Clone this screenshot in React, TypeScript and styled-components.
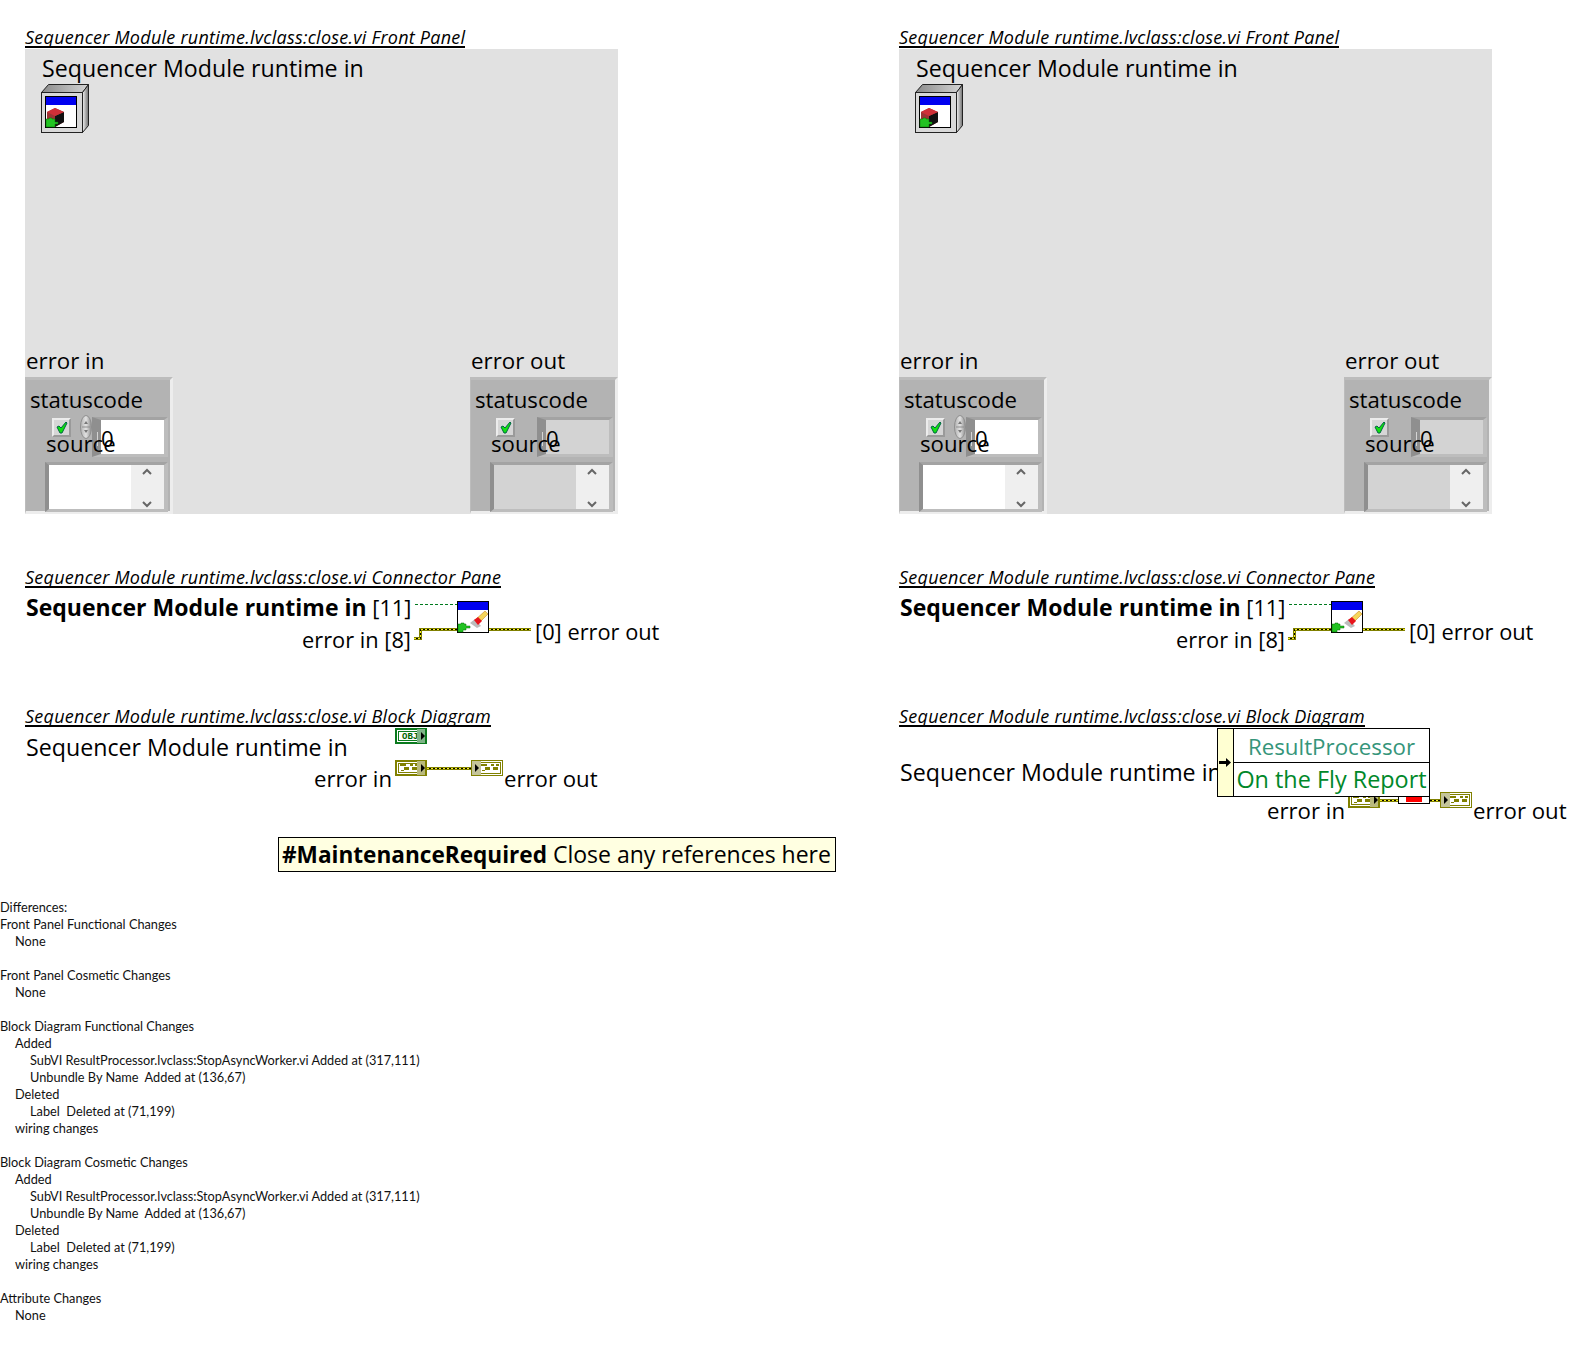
import React from "react";
import styled, { createGlobalStyle } from "styled-components";

const labelFont = `"Open Sans", "Noto Sans", sans-serif`;

const GlobalStyle = createGlobalStyle`
  html, body {
    margin: 0;
    padding: 0;
    background: #fff;
  }
`;

const Page = styled.div`
  width: 1594px;
  height: 1358px;
  overflow: hidden;
  font-family: ${labelFont};
  color: #000;
`;

const Columns = styled.div`
  display: grid;
  grid-template-columns: 874px 720px;
`;

const Column = styled.div`
  padding: 28px 0 0 25px;
  display: flex;
  flex-direction: column;
`;

const SectionTitle = styled.div<{ $gap?: number }>`
  width: fit-content;
  height: 18px;
  line-height: 19px;
  margin-top: ${(p) => p.$gap || 0}px;
  font-size: 18px;
  letter-spacing: 0.25px;
  font-style: italic;
  border-bottom: 2px solid #000;
  white-space: nowrap;
`;

const FrontPanel = styled.div`
  width: 593px;
  height: 465px;
  margin-top: 1px;
  background: #e1e1e1;
  display: flex;
  flex-direction: column;
  justify-content: space-between;
`;

const PanelHead = styled.div`
  padding: 4px 0 0 16px;
  display: flex;
  flex-direction: column;
  align-items: flex-start;
`;

const BigLabel = styled.span`
  font-size: 23.2px;
  line-height: 31px;
  padding-left: 1px;
  white-space: nowrap;
`;

const PanelFoot = styled.div`
  display: flex;
  justify-content: space-between;
  align-items: flex-end;
`;

const ErrorGroup = styled.div`
  display: flex;
  flex-direction: column;
`;

const ClusterName = styled.span`
  font-size: 22.3px;
  line-height: 27px;
  padding: 0 0 3px 1px;
  height: 27px;
`;

const Cluster = styled.div`
  position: relative;
  width: 148px;
  height: 137px;
  box-sizing: border-box;
  background: #b3b3b3;
  border-top: 3px solid #bcbcbc;
  border-left: 1px solid #bcbcbc;
  border-right: 3px solid #ededed;
  border-bottom: 3px solid #ededed;
`;

const ClusterText = styled.span<{ $x: number; $y: number }>`
  position: absolute;
  left: ${(p) => p.$x}px;
  top: ${(p) => p.$y}px;
  font-size: 22.2px;
  line-height: 28px;
  white-space: nowrap;
`;

const CheckButton = styled.div<{ $x: number }>`
  position: absolute;
  left: ${(p) => p.$x}px;
  top: 38px;
  width: 19px;
  height: 19px;
  box-sizing: border-box;
  background: #d6d6d6;
  border: 2px solid;
  border-color: #ececec #9a9a9a #9a9a9a #ececec;
  display: flex;
  align-items: center;
  justify-content: center;
`;

const Spinner = styled.svg`
  position: absolute;
  left: 54px;
  top: 35px;
`;

const ValueWell = styled.div<{ $indicator?: boolean; $top: number; $left: number; $height: number }>`
  position: absolute;
  left: ${(p) => p.$left}px;
  top: ${(p) => p.$top}px;
  width: ${(p) => 142 - p.$left}px;
  height: ${(p) => p.$height}px;
  box-sizing: border-box;
  background: ${(p) => (p.$indicator ? "#d3d3d3" : "#fff")};
  border-style: solid;
  border-color: #a3a3a3 #bdbdbd #bdbdbd #8f8f8f;
  border-width: 3px 4px 3px 4px;
`;

const NumericWell = styled(ValueWell)`
  border-left-width: 9px;

  &::before {
    content: "";
    position: absolute;
    left: -4px;
    top: 12px;
    width: 1px;
    height: 14px;
    background: #d4d4d4;
  }
`;

const ScrollTrack = styled.div`
  position: absolute;
  right: 0;
  top: 0;
  bottom: 0;
  width: 33px;
  background: #efefef;
  display: flex;
  flex-direction: column;
  justify-content: space-between;
  align-items: center;
  padding: 3px 2px 1px 0;
  box-sizing: border-box;
`;

const Canvas = styled.div<{ $height: number }>`
  position: relative;
  width: 660px;
  height: ${(p) => p.$height}px;
`;

const CanvasText = styled.span<{ $x?: number; $right?: number; $y: number }>`
  position: absolute;
  ${(p) => (p.$right !== undefined ? `right: ${p.$right}px;` : `left: ${p.$x}px;`)}
  top: ${(p) => p.$y}px;
  font-size: 22.2px;
  line-height: 30px;
  white-space: nowrap;
`;

const NameText = styled(CanvasText)`
  font-size: 23.2px;
`;

const PaneText = styled(CanvasText)`
  font-size: 21.8px;
`;

const Strong = styled.b`
  font-weight: 700;
  font-size: 22.6px;
`;

const PaneName = styled(Strong)`
  font-size: 23px;
`;

const CanvasGlyph = styled.svg<{ $x: number; $y: number }>`
  position: absolute;
  left: ${(p) => p.$x}px;
  top: ${(p) => p.$y}px;
  display: block;
`;

const Note = styled.div`
  position: absolute;
  left: 253px;
  top: 110px;
  width: 558px;
  height: 35px;
  box-sizing: border-box;
  border: 1px solid #000;
  background: #ffffe1;
  padding-left: 3px;
  font-size: 23px;
  line-height: 33px;
  white-space: nowrap;
`;

const ClassNode = styled.div`
  position: absolute;
  left: 318px;
  top: 1px;
  width: 213px;
  height: 69px;
  box-sizing: border-box;
  border: 1px solid #000;
  background: #fff;
  display: grid;
  grid-template-columns: 16px 1fr;
  grid-template-rows: 34px 1fr;
`;

const NodeRail = styled.div`
  grid-row: 1 / span 2;
  background: #ffffd2;
  border-right: 1px solid #000;
  position: relative;
`;

const NodeArrow = styled.svg`
  position: absolute;
  left: 0;
  top: 29px;
`;

const NodeRow = styled.div<{ $tone: string; $size: number; $line?: boolean }>`
  color: ${(p) => p.$tone};
  font-size: ${(p) => p.$size}px;
  line-height: 30px;
  padding-top: ${(p) => (p.$line ? 3 : 1)}px;
  text-align: center;
  white-space: nowrap;
  ${(p) => p.$line && "border-bottom: 1px solid #000;"}
`;

const StopVi = styled.div`
  position: absolute;
  left: 499px;
  top: 70px;
  width: 32px;
  height: 7px;
  box-sizing: border-box;
  background: #fff;
  border: 1px solid #000;
  border-width: 0 1px 1px 1px;
  display: flex;
  justify-content: center;
`;

const StopFlag = styled.div`
  width: 16px;
  height: 5px;
  background: #f00;
`;

const DiffText = styled.div`
  font-family: "Lato", "Open Sans", sans-serif;
  font-size: 12.75px;
  color: #111;
`;

const DiffLine = styled.div<{ $level: number }>`
  height: 17px;
  line-height: 17px;
  padding-left: ${(p) => p.$level * 15}px;
  white-space: pre;
`;

const Wire: React.FC<{ d: string }> = ({ d }) => (
  <>
    <path d={d} fill="none" stroke="#808000" strokeWidth="3" />
    <path d={d} fill="none" stroke="#000" strokeWidth="1" />
    <path d={d} fill="none" stroke="#f8f020" strokeWidth="1" strokeDasharray="2 2" />
  </>
);

const ClusterMarks: React.FC<{ tone: string; dx: number }> = ({ tone, dx }) => (
  <g fill={tone} transform={`translate(${dx} 0)`}>
    <rect x="0" y="4" width="6" height="2" />
    <rect x="10" y="4" width="3" height="2" />
    <rect x="15" y="4" width="3" height="2" />
    <rect x="4" y="7" width="5" height="3" />
    <rect x="12" y="7" width="5" height="3" />
    <rect x="1" y="10" width="3" height="1" />
  </g>
);

const ErrorControl: React.FC<{ x: number; y: number }> = ({ x, y }) => (
  <CanvasGlyph $x={x} $y={y} width="32" height="16" viewBox="0 0 32 16">
    <rect x="0" y="0" width="32" height="16" fill="#808000" />
    <rect x="2" y="2" width="28" height="12" fill="#fff" />
    <rect x="3.5" y="3.5" width="25" height="9" fill="none" stroke="#808000" />
    <ClusterMarks tone="#808000" dx={5} />
    <rect x="22" y="1" width="8" height="14" fill="#b9b97d" />
    <path d="M26 4l4 4-4 4z" fill="#000" />
  </CanvasGlyph>
);

const ErrorIndicator: React.FC<{ x: number; y: number }> = ({ x, y }) => (
  <CanvasGlyph $x={x} $y={y} width="32" height="16" viewBox="0 0 32 16">
    <rect x="0.5" y="0.5" width="31" height="15" fill="#fff" stroke="#808000" />
    <rect x="2.5" y="2.5" width="27" height="11" fill="none" stroke="#808000" />
    <rect x="1" y="1" width="9" height="14" fill="#c4c49a" />
    <path d="M4 4l4 4-4 4z" fill="#000" />
    <ClusterMarks tone="#808000" dx={10} />
  </CanvasGlyph>
);

const ObjControl: React.FC<{ x: number; y: number }> = ({ x, y }) => (
  <CanvasGlyph $x={x} $y={y} width="32" height="16" viewBox="0 0 32 16">
    <rect x="0" y="0" width="32" height="16" fill="#0b7a1e" />
    <rect x="2" y="2" width="28" height="12" fill="#fff" />
    <rect x="3.5" y="3.5" width="25" height="9" fill="none" stroke="#0b7a1e" />
    <text
      x="7"
      y="11"
      fontFamily="'Liberation Mono', monospace"
      fontSize="9"
      fontWeight="700"
      fill="#006400"
    >
      OBJ
    </text>
    <rect x="22" y="1" width="8" height="14" fill="#7fb487" />
    <path d="M26 4l4 4-4 4z" fill="#000" />
  </CanvasGlyph>
);

const ClassIcon: React.FC = () => (
  <svg width="48" height="49" viewBox="0 0 48 49" style={{ display: "block" }}>
    <defs>
      <linearGradient id="sideShade" x1="0" y1="0" x2="1" y2="0">
        <stop offset="0" stopColor="#f2f2f2" />
        <stop offset="1" stopColor="#6f6f6f" />
      </linearGradient>
      <linearGradient id="topShade" x1="0" y1="0" x2="1" y2="0">
        <stop offset="0" stopColor="#8a8a8a" />
        <stop offset="1" stopColor="#d5d5d5" />
      </linearGradient>
    </defs>
    <path d="M0.5 8.5L7.5 0.5H47.5L41.5 8.5Z" fill="url(#topShade)" stroke="#222" />
    <path d="M41.5 8.5L47.5 0.5V41.5L41.5 48.5Z" fill="url(#sideShade)" stroke="#222" />
    <rect x="0.5" y="8.5" width="41" height="40" fill="#d8d8d8" stroke="#222" />
    <rect x="4.5" y="12.5" width="31" height="31" fill="#fff" stroke="#000" />
    <rect x="5" y="13" width="30" height="8" fill="#0000f0" />
    <path d="M6 28l8-4 9 4v10l-9 5-8-5z" fill="#9c3434" />
    <path d="M14 32l9-4v10l-9 5z" fill="#111" />
    <path d="M6 28l8-4 9 4-9 4z" fill="#cf3038" />
    <path d="M5 35h3v-1h3v1h3v3h3v2h-3v3H5z" fill="#22c322" stroke="#0a6d0a" strokeWidth="0.5" />
  </svg>
);

const ConnectorGlyph: React.FC = () => (
  <CanvasGlyph $x={389} $y={12} width="120" height="44" viewBox="0 0 120 44">
    <path d="M1 4.5H43" stroke="#007a1e" strokeDasharray="3 2" fill="none" />
    <Wire d="M0 38.5H6.5V29.5H43" />
    <Wire d="M75 29.5H117" />
    <rect x="43.5" y="1.5" width="31" height="31" fill="#fff" stroke="#000" />
    <rect x="44" y="2" width="30" height="8" fill="#0000f0" />
    <path d="M56 23l5-4 6 7-4 2z" fill="#bcbcbc" />
    <path d="M71 11l3 3-9 9-4-3z" fill="#f5d65a" stroke="#c9862a" strokeWidth="0.6" />
    <path d="M60 20l4-3 4 4-4 4z" fill="#e8141c" />
    <path d="M44 24h3v-1h3v1h2v2h4v2h-4v2h-3v2h-5z" fill="#22c322" stroke="#0a6d0a" strokeWidth="0.5" />
  </CanvasGlyph>
);

const ChevronUp = () => (
  <svg width="10" height="7" viewBox="0 0 10 7">
    <path d="M1 6l4-4 4 4" fill="none" stroke="#666" strokeWidth="2" />
  </svg>
);

const ChevronDown = () => (
  <svg width="10" height="7" viewBox="0 0 10 7">
    <path d="M1 1l4 4 4-4" fill="none" stroke="#666" strokeWidth="2" />
  </svg>
);

const ErrorCluster: React.FC<{ name: string; indicator?: boolean }> = ({ name, indicator }) => (
  <ErrorGroup>
    <ClusterName>{name}</ClusterName>
    <Cluster>
      <ClusterText $x={4} $y={6}>
        statuscode
      </ClusterText>
      <CheckButton $x={indicator ? 25 : 26}>
        <svg width="13" height="13" viewBox="0 0 13 13">
          <path d="M2 6l2-1 2 2 5-6 1 1-5 10H5z" fill="#10e010" stroke="#064" strokeWidth="1" />
        </svg>
      </CheckButton>
      {!indicator && (
        <Spinner width="12" height="24" viewBox="0 0 12 24">
          <defs>
            <linearGradient id="spinShade" x1="0" y1="0" x2="1" y2="0">
              <stop offset="0" stopColor="#b0b0b0" />
              <stop offset="0.5" stopColor="#e2e2e2" />
              <stop offset="1" stopColor="#8c8c8c" />
            </linearGradient>
          </defs>
          <ellipse cx="6" cy="12" rx="5.5" ry="11.5" fill="url(#spinShade)" stroke="#8f8f8f" />
          <path d="M2 12h8" stroke="#8f8f8f" />
          <path d="M6 6l2 3H4zM6 18l2-3H4z" fill="#777" />
        </Spinner>
      )}
      <NumericWell $indicator={indicator} $left={66} $top={37} $height={40} />
      <ClusterText $x={75} $y={45}>
        0
      </ClusterText>
      <ClusterText $x={20} $y={50}>
        source
      </ClusterText>
      <ValueWell $indicator={indicator} $left={19} $top={82} $height={50}>
        <ScrollTrack>
          <ChevronUp />
          <ChevronDown />
        </ScrollTrack>
      </ValueWell>
    </Cluster>
  </ErrorGroup>
);

const FrontPanelSection: React.FC = () => (
  <>
    <SectionTitle>Sequencer Module runtime.lvclass:close.vi Front Panel</SectionTitle>
    <FrontPanel>
      <PanelHead>
        <BigLabel>Sequencer Module runtime in</BigLabel>
        <ClassIcon />
      </PanelHead>
      <PanelFoot>
        <ErrorCluster name="error in" />
        <ErrorCluster name="error out" indicator />
      </PanelFoot>
    </FrontPanel>
  </>
);

const ConnectorSection: React.FC = () => (
  <>
    <SectionTitle $gap={54}>Sequencer Module runtime.lvclass:close.vi Connector Pane</SectionTitle>
    <Canvas $height={119}>
      <PaneText $x={1} $y={4}>
        <PaneName>Sequencer Module runtime in</PaneName> [11]
      </PaneText>
      <PaneText $right={274} $y={37}>
        error in [8]
      </PaneText>
      <ConnectorGlyph />
      <PaneText $x={510} $y={29}>
        [0] error out
      </PaneText>
    </Canvas>
  </>
);

const diffLines: [number, string][] = [
  [0, "Differences:"],
  [0, "Front Panel Functional Changes"],
  [1, "None"],
  [0, ""],
  [0, "Front Panel Cosmetic Changes"],
  [1, "None"],
  [0, ""],
  [0, "Block Diagram Functional Changes"],
  [1, "Added"],
  [2, "SubVI ResultProcessor.lvclass:StopAsyncWorker.vi Added at (317,111)"],
  [2, "Unbundle By Name  Added at (136,67)"],
  [1, "Deleted"],
  [2, "Label  Deleted at (71,199)"],
  [1, "wiring changes"],
  [0, ""],
  [0, "Block Diagram Cosmetic Changes"],
  [1, "Added"],
  [2, "SubVI ResultProcessor.lvclass:StopAsyncWorker.vi Added at (317,111)"],
  [2, "Unbundle By Name  Added at (136,67)"],
  [1, "Deleted"],
  [2, "Label  Deleted at (71,199)"],
  [1, "wiring changes"],
  [0, ""],
  [0, "Attribute Changes"],
  [1, "None"],
];

const App: React.FC = () => (
  <Page>
    <GlobalStyle />
    <Columns>
      <Column>
        <FrontPanelSection />
        <ConnectorSection />
        <SectionTitle>Sequencer Module runtime.lvclass:close.vi Block Diagram</SectionTitle>
        <Canvas $height={172}>
          <NameText $x={1} $y={5}>
            Sequencer Module runtime in
          </NameText>
          <ObjControl x={370} y={1} />
          <CanvasText $right={293} $y={37}>
            error in
          </CanvasText>
          <CanvasGlyph $x={402} $y={33} width="44" height="16" viewBox="0 0 44 16">
            <Wire d="M0 8.5H44" />
          </CanvasGlyph>
          <ErrorControl x={370} y={33} />
          <ErrorIndicator x={446} y={33} />
          <CanvasText $x={479} $y={37}>
            error out
          </CanvasText>
          <Note>
            <Strong>#MaintenanceRequired</Strong> Close any references here
          </Note>
        </Canvas>
      </Column>
      <Column>
        <FrontPanelSection />
        <ConnectorSection />
        <SectionTitle>Sequencer Module runtime.lvclass:close.vi Block Diagram</SectionTitle>
        <Canvas $height={172}>
          <NameText $x={1} $y={30}>
            Sequencer Module runtime in
          </NameText>
          <CanvasText $right={214} $y={69}>
            error in
          </CanvasText>
          <CanvasGlyph $x={481} $y={65} width="60" height="16" viewBox="0 0 60 16">
            <Wire d="M0 8.5H60" />
          </CanvasGlyph>
          <ErrorControl x={449} y={65} />
          <StopVi>
            <StopFlag />
          </StopVi>
          <ErrorIndicator x={541} y={65} />
          <CanvasText $x={574} $y={69}>
            error out
          </CanvasText>
          <ClassNode>
            <NodeRail>
              <NodeArrow width="14" height="9" viewBox="0 0 14 9">
                <path d="M1 3h7V0l5 4.5L8 9V6H1z" fill="#000" />
              </NodeArrow>
            </NodeRail>
            <NodeRow $tone="#35957a" $size={22.3} $line>
              ResultProcessor
            </NodeRow>
            <NodeRow $tone="#00882a" $size={23.4}>
              On the Fly Report
            </NodeRow>
          </ClassNode>
        </Canvas>
      </Column>
    </Columns>
    <DiffText>
      {diffLines.map(([level, text], i) => (
        <DiffLine key={i} $level={level}>
          {text}
        </DiffLine>
      ))}
    </DiffText>
  </Page>
);

export default App;
